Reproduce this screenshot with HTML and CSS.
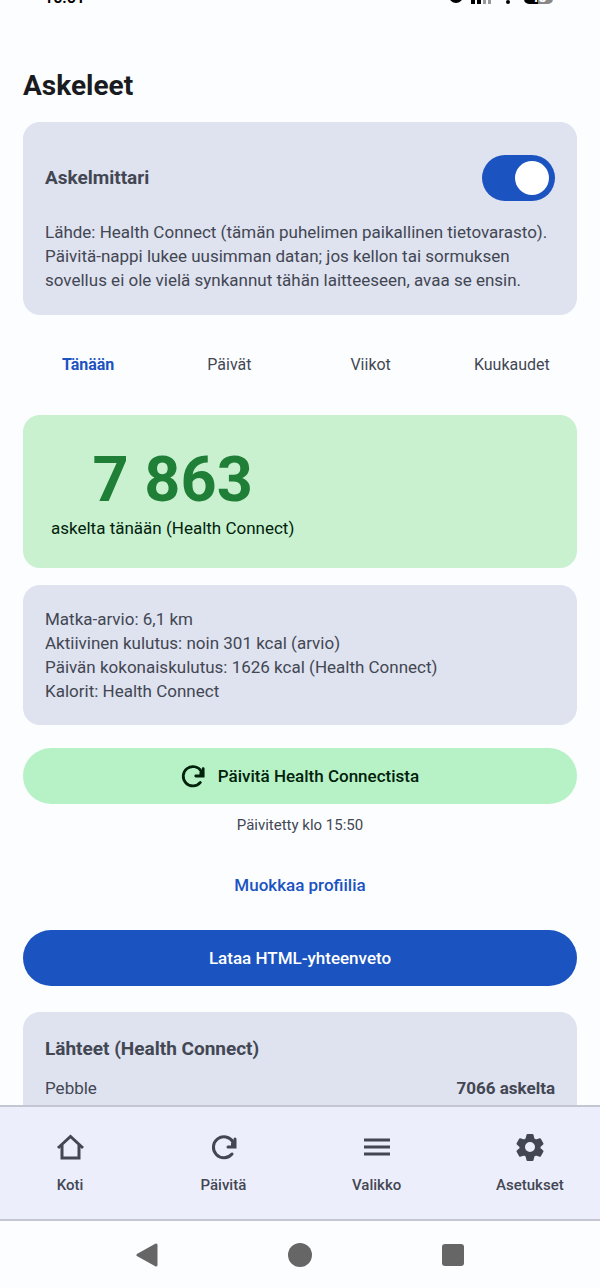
FILE: index.html
```html
<!DOCTYPE html>
<html lang="fi">
<head>
    <meta charset="UTF-8">
    <meta name="viewport" content="width=device-width, initial-scale=1.0">
    <title>Askeleet</title>
    <link rel="stylesheet" href="styles.css">
</head>
<body>
    <div class="app">
        <header class="status">
            <span class="clock">15:51</span>
            <div class="status-icons">
                <svg width="14" height="14" viewBox="0 0 14 14"><circle cx="7" cy="6" r="7"/></svg>
                <svg width="22" height="14" viewBox="0 0 22 14"><path d="M1 8h4v6H1zM7 5h4v9H7z"/><path d="M13 2h3v12h-3zM18 0h3v14h-3z" fill="#999"/></svg>
                <svg width="18" height="14" viewBox="0 0 18 14"><circle cx="9" cy="12" r="2"/></svg>
                <span class="battery">48</span>
            </div>
        </header>
        <main class="content">
            <h1>Askeleet</h1>
            <section class="card meter">
                <div class="row">
                    <label class="card-title" for="meter">Askelmittari</label>
                    <input class="switch" type="checkbox" id="meter" checked>
                </div>
                <p>Lähde: Health Connect (tämän puhelimen paikallinen tietovarasto). Päivitä-nappi lukee uusimman datan; jos kellon tai sormuksen sovellus ei ole vielä synkannut tähän laitteeseen, avaa se ensin.</p>
            </section>
            <div class="tabs">
                <button class="tab active">Tänään</button>
                <button class="tab">Päivät</button>
                <button class="tab">Viikot</button>
                <button class="tab">Kuukaudet</button>
            </div>
            <section class="card today">
                <div class="total">
                    <div class="count">7 863</div>
                    <p>askelta tänään (Health Connect)</p>
                </div>
            </section>
            <section class="card stats">
                <p>Matka-arvio: 6,1 km</p>
                <p>Aktiivinen kulutus: noin 301 kcal (arvio)</p>
                <p>Päivän kokonaiskulutus: 1626 kcal (Health Connect)</p>
                <p>Kalorit: Health Connect</p>
            </section>
            <button class="btn btn-green">
                <svg width="24" height="24" viewBox="4 4 26 26" fill="none" stroke="currentColor" stroke-width="3" stroke-linecap="round"><path d="M25 24A10.500 10.500 0 1 1 26 12"/><path d="M20 17h8V9"/><path d="M24 13l5-5v9h-5z" fill="currentColor" stroke="none"/></svg>
                Päivitä Health Connectista
            </button>
            <p class="updated">Päivitetty klo 15:50</p>
            <button class="btn btn-text">Muokkaa profiilia</button>
            <button class="btn btn-blue">Lataa HTML-yhteenveto</button>
            <section class="card sources">
                <h2 class="card-title">Lähteet (Health Connect)</h2>
                <div class="row">
                    <span>Pebble</span>
                    <b>7066 askelta</b>
                </div>
            </section>
        </main>
        <nav class="bottom-nav">
            <a href="#">
                <svg width="34" height="34" viewBox="0 0 34 34" fill="none" stroke="currentColor" stroke-width="3"><path d="M5 18L17.500 6.500 30 18"/><path d="M9 15v13h17V15"/></svg>
                Koti
            </a>
            <a href="#">
                <svg width="34" height="34" viewBox="0 0 34 34" fill="none" stroke="currentColor" stroke-width="3" stroke-linecap="round"><path d="M26 24A10.500 10.500 0 1 1 27 12"/><path d="M22 17h7V9"/><path d="M25 13l5-5v9h-5z" fill="currentColor" stroke="none"/></svg>
                Päivitä
            </a>
            <a href="#">
                <svg width="34" height="34" viewBox="0 0 34 34" fill="none" stroke="currentColor" stroke-width="3"><path d="M4 10h26M4 17h26M4 24h26"/></svg>
                Valikko
            </a>
            <a href="#">
                <svg width="34" height="34" viewBox="0 0 34 34" fill="currentColor" stroke="currentColor" stroke-width="2" stroke-linejoin="round"><path fill-rule="evenodd" d="M14.500 5h5l1 4 2.500 1.500 4-1.200 2.500 4.400-3 2.800v2l3 2.800-2.500 4.400-4-1.200-2.500 1.500-1 4h-5l-1-4-2.500-1.500-4 1.200-2.500-4.400 3-2.800v-2l-3-2.800L7 9.300l4 1.200L13.500 9zM17 11a6 6 0 1 0 0 12 6 6 0 1 0 0-12z"/></svg>
                Asetukset
            </a>
        </nav>
        <footer class="system">
            <svg width="24" height="24" viewBox="0 0 24 24"><path d="M3 12L21 2v20z" stroke-width="3" stroke-linejoin="round"/></svg>
            <svg width="24" height="24" viewBox="0 0 24 24"><circle cx="12" cy="12" r="12"/></svg>
            <svg width="24" height="24" viewBox="0 0 24 24"><rect x="1" y="1" width="22" height="22" rx="3"/></svg>
        </footer>
    </div>
</body>
</html>
```
FILE: styles.css
```css
* {
    margin: 0;
    padding: 0;
    box-sizing: border-box;
}
body {
    font-family: Roboto, "Noto Sans", sans-serif;
    font-size: 17px;
    line-height: 24px;
    color: #424753;
    background: #fcfdff;
}
button {
    font: inherit;
    color: inherit;
    background: none;
    border: none;
    cursor: pointer;
}
.app {
    display: flex;
    flex-direction: column;
    height: 100vh;
    overflow: hidden;
}

/* Scrolled-up status bar */
.status {
    display: flex;
    justify-content: space-between;
    align-items: flex-end;
    height: 4px;
    padding: 0 47px 0 44px;
    flex-shrink: 0;
    color: #000;
}
.clock {
    font-size: 16px;
    font-weight: 600;
    line-height: 12px;
}
.status-icons {
    display: flex;
    align-items: flex-end;
    gap: 7px;
}
.battery {
    width: 29px;
    height: 16px;
    border-radius: 5px;
    background: linear-gradient(to right, #000 50%, #888 50%);
    color: #fff;
    font-size: 14px;
    font-weight: 700;
    line-height: 19px;
    text-align: center;
}

.content {
    display: flex;
    flex-direction: column;
    flex: 1;
    min-height: 0;
    padding: 64px 23px 0;
    overflow: hidden;
}
.content > * {
    flex-shrink: 0;
}
h1 {
    font-size: 28px;
    font-weight: 700;
    line-height: 36px;
    color: #1a1b20;
    margin-bottom: 18px;
}
.card {
    padding: 22px;
    border-radius: 17px;
    background: #dfe2ef;
}
.card-title {
    font-size: 19px;
    font-weight: 700;
    line-height: 28px;
}
.row {
    display: flex;
    justify-content: space-between;
    align-items: center;
}
.meter .row {
    height: 68px;
    margin-bottom: 8px;
}
.switch {
    appearance: none;
    display: flex;
    justify-content: flex-end;
    align-items: center;
    width: 73px;
    height: 46px;
    padding: 0 6px;
    border-radius: 23px;
    background: #1b53c0;
}
.switch::before {
    content: "";
    width: 34px;
    height: 34px;
    border-radius: 50%;
    background: #fff;
}
.switch:not(:checked) {
    justify-content: flex-start;
    background: #747885;
}
.meter {
    padding-bottom: 23px;
}
.tabs {
    display: flex;
    gap: 11px;
    margin: 22px 0;
}
.tab {
    flex: 1;
    height: 56px;
    font-size: 16px;
}
.tab.active {
    color: #1b53c0;
    font-weight: 700;
}
.today {
    display: flex;
    padding: 28px;
    margin-bottom: 17px;
    background: #c9f1d0;
    color: #00210b;
}
.total {
    text-align: center;
}
.count {
    font-size: 63px;
    font-weight: 700;
    line-height: 73px;
    color: #207f36;
}
.stats {
    margin-bottom: 23px;
}
.btn {
    display: flex;
    justify-content: center;
    align-items: center;
    gap: 13px;
    height: 56px;
    border-radius: 28px;
    font-weight: 500;
}
.btn-green {
    background: #b7f2c6;
    color: #00210b;
}
.updated {
    margin: 9px 0 20px;
    font-size: 15px;
    text-align: center;
}
.btn-text {
    color: #1b53c0;
    margin-bottom: 17px;
}
.btn-blue {
    background: #1b53c0;
    color: #fff;
    margin-bottom: 26px;
}
.sources {
    padding-top: 23px;
}
.sources .card-title {
    margin-bottom: 13px;
}

.bottom-nav {
    display: flex;
    flex-shrink: 0;
    gap: 13px;
    height: 116px;
    border-top: 2px solid #c4c6d4;
    border-bottom: 2px solid #c4c6d4;
    background: #edeefb;
}
.bottom-nav a {
    display: flex;
    flex: 1;
    flex-direction: column;
    justify-content: center;
    align-items: center;
    gap: 9px;
    color: #424753;
    font-size: 15px;
    font-weight: 500;
    text-decoration: none;
}
.system {
    display: flex;
    justify-content: space-around;
    align-items: center;
    height: 67px;
    padding: 0 70px;
    flex-shrink: 0;
    fill: #666;
    stroke: #666;
    stroke-width: 0;
}
```
